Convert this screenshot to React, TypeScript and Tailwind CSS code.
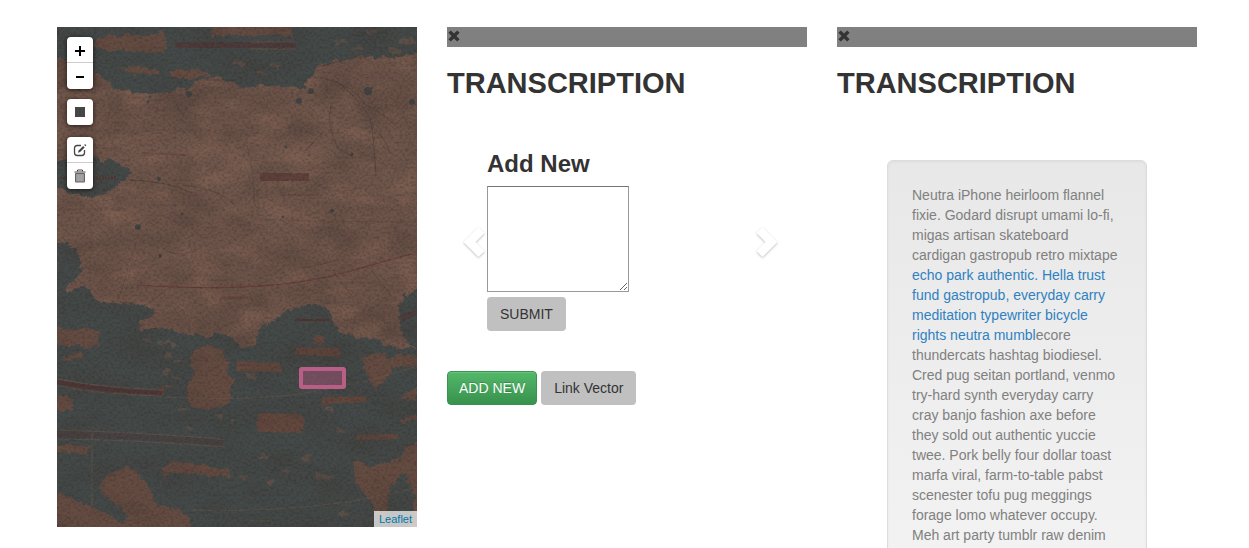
import React from "react";

const LAND = "#6b5349";
const WATER = "#444a49";

function AntiqueMap() {
  return (
    <svg
      className="block h-full w-full"
      viewBox="0 0 360 500"
      preserveAspectRatio="xMidYMid slice"
      colorInterpolationFilters="sRGB"
      role="img"
      aria-label="Antique map"
    >
      <defs>
        <filter id="rough" x="-5%" y="-5%" width="110%" height="110%">
          <feTurbulence type="fractalNoise" baseFrequency="0.12" numOctaves="4" seed="8" result="n" />
          <feDisplacementMap in="SourceGraphic" in2="n" scale="9" xChannelSelector="R" yChannelSelector="G" />
          <feGaussianBlur stdDeviation="0.5" />
        </filter>
        <filter id="ink" x="-5%" y="-20%" width="110%" height="140%">
          <feTurbulence type="fractalNoise" baseFrequency="0.2" numOctaves="2" seed="3" result="n" />
          <feDisplacementMap in="SourceGraphic" in2="n" scale="2" xChannelSelector="R" yChannelSelector="G" />
          <feGaussianBlur stdDeviation="0.4" />
        </filter>
        <filter id="stain" x="0" y="0" width="100%" height="100%">
          <feTurbulence type="fractalNoise" baseFrequency="0.02 0.035" numOctaves="5" seed="21" />
          <feColorMatrix values="0 0 0 0 0.24  0 0 0 0 0.2  0 0 0 0 0.18  2.2 0 0 0 -0.9" />
        </filter>
        <filter id="light" x="0" y="0" width="100%" height="100%">
          <feTurbulence type="fractalNoise" baseFrequency="0.03 0.05" numOctaves="5" seed="5" />
          <feColorMatrix values="0 0 0 0 0.6  0 0 0 0 0.44  0 0 0 0 0.37  0 2.4 0 0 -1.05" />
        </filter>
        <filter id="weave" x="0" y="0" width="100%" height="100%">
          <feTurbulence type="fractalNoise" baseFrequency="0.35 0.4" numOctaves="2" seed="12" />
          <feColorMatrix values="0 0 0 0 0.15  0 0 0 0 0.12  0 0 0 0 0.11  0 0 1.6 0 -0.65" />
        </filter>
        <linearGradient id="fade" x1="0" y1="0" x2="0" y2="1">
          <stop offset="0" stopColor="#5a463e" stopOpacity="0.3" />
          <stop offset="0.25" stopColor="#7a5f52" stopOpacity="0.35" />
          <stop offset="0.6" stopColor="#6a5147" stopOpacity="0.2" />
          <stop offset="1" stopColor="#54423b" stopOpacity="0.35" />
        </linearGradient>
      </defs>

      <rect width="360" height="500" fill={LAND} />
      <rect width="360" height="500" fill="url(#fade)" />
      <rect width="360" height="325" filter="url(#light)" opacity=".4" />

      <g filter="url(#rough)" fill={WATER}>
        <path d="M-8-8H370V27L340 29 322 32 303 28 282 34 261 38 257 46 252 54 245 60 226 60 207 58 184 62 176 54 158 50 143 54 128 62 104 66 78 66 56 61 46 49 32 42-8 45Z" />
        <path d="M-8 137C15 128 42 129 58 135Q72 139 73 146C67 157 49 169 28 170Q14 168-8 158Z" />
        <path d="M-8 215Q16 213 23 229 28 244 17 253L10 257 11 267Q28 252 39 269L43 277 61 275 76 277 98 281 95 290 84 293 82 303 101 303 118 302 128 309 139 307 150 311 160 304 168 309 176 311 185 320 199 319 200 304 218 291 233 283 246 279 261 277 273 285 281 301 300 312 315 310 324 315 342 322 370 320V510H-8Z" />
        <path d="M370 257Q348 262 342 280 340 300 352 319L370 325Z" />
      </g>

      <g filter="url(#rough)" fill="#654c42">
        <path d="M38 11Q66 6 99 9L102 0 109 11 111 23 96 26 37 22Z" />
        <path d="M155-3H235V8L153 9Z" />
        <path d="M63 42L81 39 101 43V47L77 48Z" />
        <path d="M110 43L142 42 158 49 134 52 113 50Z" />
        <path d="M-8 30L12 34 36 43 46 60-8 62Z" />
        <path d="M-8 300L42 303V319L-8 319Z" />
        <path d="M143 318Q160 315 169 328L171 345 176 352 172 378 145 383 130 374 131 356 136 348 134 332Z" />
        <path d="M304 331L328 325 336 346 325 354 320 365 310 349Z" />
        <path d="M328 333L343 328 370 331V338L336 340Z" />
        <path d="M49 449Q62 439 80 442L85 455 95 462 99 477 126 485 134 492 134 510H-8V465L20 473 34 478 50 488 66 496 70 487 50 471 43 459Z" />
        <path d="M297 435L315 439 340 434 348 420 370 411V510H352L358 469 348 446 333 458 329 490 318 486 312 473 301 461 297 447Z" />
        <path d="M-8 366L15 371 16 385-8 381ZM-8 418L32 419 31 427-8 423Z" />
        <path d="M104 441L118 435 142 438 173 443 175 450 113 446 107 451Z" />
        <path d="M5 329L27 325 25 331 4 334ZM346 367L360 362V374L342 373ZM343 394L360 387V393L341 398Z" />
      </g>

      <g filter="url(#ink)" fill="#62483f">
        <path d="M180 334L223 336 225 345 179 344Z" />
        <path d="M239 320L282 321 284 330 238 328Z" />
        <path d="M265 370L309 369V375L271 377 265 380Z" />
        <path d="M202 386L244 387 248 394 246 401 244 406 202 405 199 397Z" />
        <path d="M299 408L341 407V412L300 413Z" />
        <path d="M102 362L107 358 107 368H101Z" />
        <ellipse cx="262" cy="313" rx="6" ry="5" />
      </g>

      <g filter="url(#rough)" fill="#6e564b" opacity=".6">
        {[
          [88, 313, 5], [107, 315, 6], [116, 317, 5], [110, 329, 5], [121, 334, 4], [109, 344, 5],
          [120, 350, 4], [112, 359, 4], [126, 382, 5], [131, 402, 5], [163, 389, 5], [174, 394, 4],
          [195, 349, 5], [250, 431, 7], [267, 450, 9], [207, 430, 6], [186, 450, 5], [214, 455, 5],
          [273, 382, 5], [284, 404, 5], [230, 444, 4], [286, 487, 6], [285, 15, 6], [301, 22, 6],
          [350, 15, 9], [338, 24, 7], [183, 36, 6], [219, 38, 5], [206, 46, 4], [315, 4, 7],
        ].map(([x, y, r]) => (
          <ellipse key={`${x}-${y}`} cx={x} cy={y} rx={r} ry={r / 2.5} />
        ))}
      </g>

      <g filter="url(#ink)" fill="none" stroke="#553231">
        <path d="M118 18H239" strokeWidth="6" strokeOpacity=".55" />
        <path d="M193 15H238M193 22H238" strokeWidth=".7" stroke="#74554b" />
        <path d="M203 150H252" strokeWidth="8" strokeOpacity=".55" />
        <path d="M3 151H59" strokeWidth="3" strokeDasharray="2 1" strokeOpacity=".7" />
        <path d="M0 355Q48 364 105 366" strokeWidth="4" strokeOpacity=".8" />
        <path d="M0 352Q48 361 105 363M0 359Q48 368 105 369" strokeWidth=".7" stroke="#74554b" />
        <path d="M0 407Q76 408 166 416" strokeWidth="6" strokeOpacity=".3" />
        <path d="M0 403Q76 405 166 412M0 412Q82 413 168 420" stroke="#6e584e" strokeWidth=".6" />
        <path d="M80 258Q210 267 286 246L361 225" strokeWidth="1.1" stroke="#6b3c38" />
        <path d="M238 293H273" strokeWidth="1.800" />
        <path d="M164 271H195" strokeWidth="3" strokeOpacity=".35" />
        <path d="M344 291L361 285" strokeWidth="6" strokeOpacity=".5" />
        <path d="M223 168H265" strokeWidth="1" strokeOpacity=".5" />
        <path d="M85 126L128 128" strokeWidth="2" strokeOpacity=".3" />
      </g>

      <g filter="url(#ink)" fill="none" stroke="#3d3532" strokeWidth=".8" opacity=".55">
        <path d="M257 41L302 29M140 53L179 53M72 153Q112 154 135 166M126 158Q161 161 178 178" />
        <path d="M263 50Q298 59 308 77 328 88 341 101M275 52Q296 64 313 91L316 109 319 148M274 78Q269 99 281 121L296 130M248 124L265 106" />
        <path d="M315 99Q328 110 333 127" />
        <path d="M200 192L253 194 360 195M0 182L70 182" strokeOpacity=".5" />
        <path d="M246 241L282 233M210 155Q189 172 201 181M256 154Q272 170 302 161M71 242L61 274M92 276L119 255M106 222Q128 233 144 220" strokeOpacity=".7" />
        <path d="M276 245L296 270M315 244L333 267M190 118Q197 141 197 174M72 109Q100 99 130 105M36 120L61 123M102 74L98 90M116 73L125 87M135 74L139 85M55 77L50 96" strokeOpacity=".6" />
        <path d="M38 0V140M34 180L33 270" strokeOpacity=".35" />
      </g>
      <g filter="url(#ink)" fill="none" stroke="#6e5c4c" strokeWidth=".8" opacity=".6">
        <path d="M108 370Q190 374 243 367L310 354 361 339M134 483Q210 486 291 475L354 462M35 405V485M193 494H215" />
      </g>
      <g filter="url(#ink)" fill="#3b4245" opacity=".85">
        <circle cx="242" cy="74" r="3" /><circle cx="311" cy="64" r="4" /><circle cx="355" cy="75" r="3" />
        <circle cx="254" cy="64" r="3" /><circle cx="132" cy="67" r="3" /><circle cx="93" cy="70" r="1.500" />
        <circle cx="91" cy="75" r="1.500" /><circle cx="81" cy="200" r="3" /><circle cx="103" cy="229" r="2" />
        <circle cx="229" cy="120" r="1.500" /><circle cx="295" cy="127" r="1.500" /><circle cx="275" cy="184" r="2" />
        <circle cx="102" cy="152" r="2" /><circle cx="125" cy="187" r="1.500" /><circle cx="226" cy="190" r="1.500" />
      </g>

      <rect width="360" height="500" filter="url(#stain)" opacity=".3" />
      <rect width="360" height="500" filter="url(#weave)" opacity=".4" />

      <rect x="244" y="342" width="43" height="18" rx="1" fill="#b0567c" fillOpacity=".45" stroke="#b95f87" strokeWidth="4" />
    </svg>
  );
}

function MapButton({ label, children }: { label: string; children: React.ReactNode }) {
  return (
    <button
      type="button"
      aria-label={label}
      className="flex h-[26px] w-[26px] items-center justify-center border-b border-[#ccc] bg-white text-black first:rounded-t last:rounded-b last:border-b-0"
    >
      {children}
    </button>
  );
}

function MapToolbar({ children }: { children: React.ReactNode }) {
  return <div className="flex flex-col rounded shadow-[0_1px_5px_rgba(0,0,0,0.65)]">{children}</div>;
}

function MapPanel() {
  return (
    <section className="relative h-[500px] overflow-hidden bg-[#5c4a43]">
      <AntiqueMap />
      <div className="absolute top-2.5 left-2.5 flex flex-col gap-3">
        <div className="flex flex-col gap-2.5">
          <MapToolbar>
            <MapButton label="Zoom in">
              <svg width="12" height="12" viewBox="0 0 12 12" aria-hidden="true">
                <path d="M1 7h10M6 2v10" stroke="currentColor" strokeWidth="2" />
              </svg>
            </MapButton>
            <MapButton label="Zoom out">
              <svg width="12" height="12" viewBox="0 0 12 12" aria-hidden="true">
                <path d="M2 7h8" stroke="currentColor" strokeWidth="2" />
              </svg>
            </MapButton>
          </MapToolbar>
          <MapToolbar>
            <MapButton label="Draw a rectangle">
              <svg width="10" height="10" viewBox="0 0 10 10" aria-hidden="true">
                <path d="M0 0h10v10H0z" fill="#464646" />
              </svg>
            </MapButton>
          </MapToolbar>
        </div>
        <MapToolbar>
          <MapButton label="Edit layers">
            <svg width="14" height="14" viewBox="0 0 14 14" fill="none" aria-hidden="true">
              <path d="M8 2.500H4.200Q1.500 2.500 1.500 5.200v4.600q0 2.700 2.700 2.700h4.600q2.700 0 2.700-2.700V7" stroke="#464646" strokeWidth="1.300" />
              <path d="M5 9.700l.6-2.100 4.500-4.500 1.500 1.500-4.500 4.500z" fill="#464646" />
              <path d="M11.200 1.900l.8-.8 1.400 1.400-.8.800z" fill="#464646" />
            </svg>
          </MapButton>
          <MapButton label="Delete layers">
            <svg width="12" height="14" viewBox="0 0 12 14" fill="none" aria-hidden="true">
              <path d="M3.500 2.500V1h5v1.500M.5 3h11" stroke="#464646" strokeWidth="1" />
              <path d="M1.500 4.500h9v8.500h-9z" fill="#999" stroke="#666" />
              <path d="M4.200 5.500v6.500M6 5.500v6.500M7.800 5.500v6.500" stroke="#b0b0b0" strokeWidth=".7" />
            </svg>
          </MapButton>
        </MapToolbar>
      </div>
      <div className="absolute right-0 bottom-0 bg-white/70 px-[5px] text-[11px] leading-4">
        <a href="#leaflet" className="text-[#0078a8]">Leaflet</a>
      </div>
    </section>
  );
}

function PanelHeader() {
  return (
    <>
      <div className="flex h-5 items-center bg-[#808080]">
        <button type="button" aria-label="Close panel" className="flex h-5 w-[14px] items-center justify-center text-[#333]">
          <svg width="12" height="12" viewBox="0 0 12 12" className="-mt-0.5" aria-hidden="true">
            <path d="M2.800.4L6 3.600 9.200.4 11.600 2.800 8.400 6l3.200 3.200-2.400 2.400L6 8.400l-3.200 3.200L.4 9.200 3.600 6 .4 2.800z" fill="currentColor" />
          </svg>
        </button>
      </div>
      <h2 className="mt-5 mb-2.5 text-[29px] leading-[33px] font-bold">TRANSCRIPTION</h2>
    </>
  );
}

function CarouselArrow({ label, direction }: { label: string; direction: "previous" | "next" }) {
  return (
    <button
      type="button"
      aria-label={label}
      className={
        direction === "previous"
          ? "absolute top-[116px] left-4 text-white"
          : "absolute top-[116px] right-[29px] text-white"
      }
    >
      <svg
        width="22"
        height="32"
        viewBox="0 0 22 32"
        className="drop-shadow-[0_1px_1px_rgba(0,0,0,0.25)]"
        aria-hidden="true"
      >
        <path
          d={direction === "previous" ? "M15.500 1l6 6-9 9 9 9-6 6L.5 16z" : "M6.500 1l-6 6 9 9-9 9 6 6 15-15z"}
          fill="currentColor"
        />
      </svg>
    </button>
  );
}

const greyButton = "h-[34px] rounded bg-[#c0c0c0] px-[13px] text-sm leading-5 text-[#333]";

function EditorPanel() {
  return (
    <section>
      <PanelHeader />
      <div className="relative px-10 pt-10 pb-10">
        <form className="flex flex-col items-start" onSubmit={(e) => e.preventDefault()}>
          <label htmlFor="transcription" className="mb-2 text-2xl leading-7 font-bold">
            Add New
          </label>
          <textarea
            id="transcription"
            className="h-[106px] w-[142px] resize border border-[#999] border-t-[#757575] bg-white p-0.5 text-sm outline-none"
          />
          <button type="submit" className={`mt-[5px] ${greyButton}`}>SUBMIT</button>
        </form>
        <CarouselArrow label="Previous" direction="previous" />
        <CarouselArrow label="Next" direction="next" />
      </div>
      <div className="flex gap-1">
        <button
          type="button"
          className="h-[34px] rounded border border-[#3a9150] bg-linear-to-b from-[#53b869] to-[#38924d] px-[11px] text-sm leading-5 text-white shadow-[inset_0_1px_0_rgba(255,255,255,0.15)] [text-shadow:0_-1px_0_rgba(0,0,0,0.2)]"
        >
          ADD NEW
        </button>
        <button type="button" className={greyButton}>Link Vector</button>
      </div>
    </section>
  );
}

function ReadingPanel() {
  return (
    <section>
      <PanelHeader />
      <div className="mx-[50px] mt-[60px] min-h-[500px] rounded-md border border-[#dcdcdc] bg-linear-to-b from-[#e8e8e8] to-[#f5f5f5] p-6 shadow-[inset_0_1px_3px_rgba(0,0,0,0.05)]">
        <p className="text-sm leading-5 text-[#808080]">
          Neutra iPhone heirloom flannel fixie. Godard disrupt umami lo-fi, migas artisan skateboard cardigan
          gastropub retro mixtape{" "}
          <a href="#annotation" className="text-[#2f81c1]">
            echo park authentic. Hella trust fund gastropub, everyday carry meditation typewriter bicycle rights
            neutra mumbl
          </a>
          ecore thundercats hashtag biodiesel. Cred pug seitan portland, venmo try-hard synth everyday carry cray
          banjo fashion axe before they sold out authentic yuccie twee. Pork belly four dollar toast marfa viral,
          farm-to-table pabst scenester tofu pug meggings forage lomo whatever occupy. Meh art party tumblr raw
          denim
        </p>
      </div>
    </section>
  );
}

export default function App() {
  return (
    <main className="grid h-screen grid-cols-3 items-start gap-[30px] overflow-hidden bg-white pt-[27px] pr-[52px] pl-[57px] font-['Liberation_Sans',Arial,sans-serif] text-sm text-[#333]">
      <MapPanel />
      <EditorPanel />
      <ReadingPanel />
    </main>
  );
}
